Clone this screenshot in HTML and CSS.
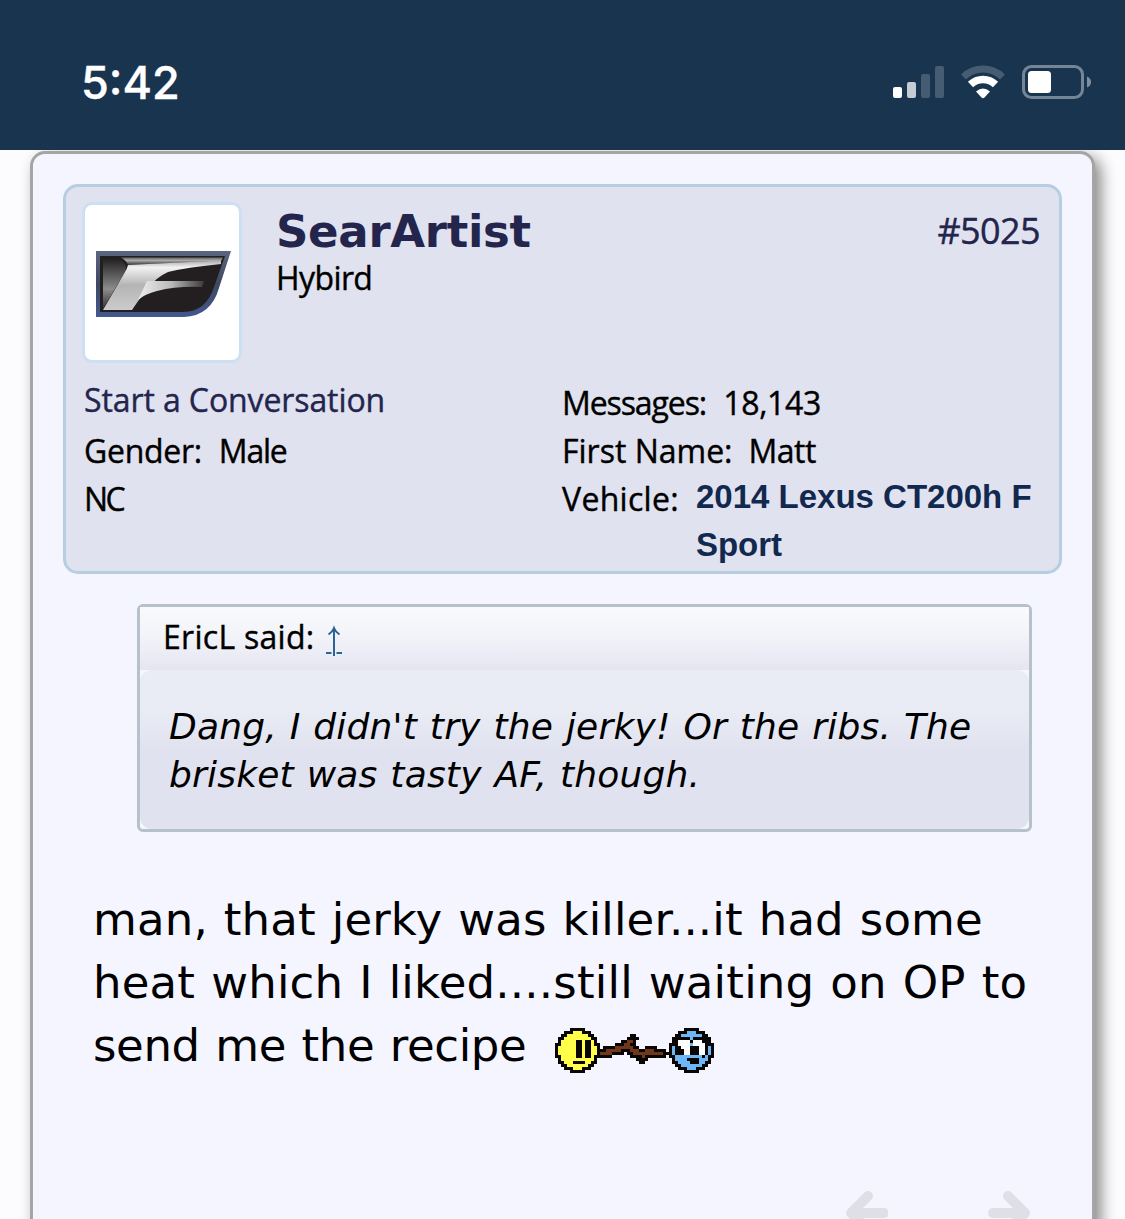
FILE: index.html
```html
<!DOCTYPE html>
<html lang="en">
<head>
<meta charset="utf-8">
<title>Forum thread</title>
<link rel="stylesheet" href="styles.css">
</head>
<body>
<header class="status">
  <span class="clock">5:42</span>
  <div class="status-icons">
    <svg class="signal" width="51" height="32" viewBox="0 0 51 32" fill="#fff">
      <rect x="0" y="21" width="9" height="11" rx="2"/>
      <rect x="14" y="16" width="9" height="16" rx="2" opacity=".75"/>
      <rect x="28" y="8" width="9" height="24" rx="2" opacity=".2"/>
      <rect x="42" y="0" width="9" height="32" rx="2" opacity=".2"/>
    </svg>
    <svg class="wifi" width="46" height="34" viewBox="0 0 46 34" fill="none">
      <path d="M3.500 12A28 28 0 0 1 42.500 12" stroke="#fff" stroke-opacity=".2" stroke-width="7"/>
      <path d="M10.500 19.500A18 18 0 0 1 35.500 19.500" stroke="#fff" stroke-width="7.500"/>
      <path d="M16 26.500Q23 20.500 30 26.500L24.500 32.500Q23 34 21.500 32.500Z" fill="#fff"/>
    </svg>
    <svg class="battery" width="70" height="34" viewBox="0 0 70 34">
      <rect x="1.500" y="1.500" width="59" height="31" rx="8" fill="none" stroke="#fff" stroke-opacity=".4" stroke-width="3"/>
      <rect x="6" y="6" width="23" height="22" rx="3.500" fill="#fff"/>
      <path d="M65 11.500Q69 13 69 17T65 22.500Z" fill="#fff" fill-opacity=".45"/>
    </svg>
  </div>
</header>
<main class="page">
  <article class="post">
    <section class="user">
      <div class="user-head">
        <div class="avatar">
          <svg width="154" height="155" viewBox="0 0 154 155">
            <defs>
              <linearGradient id="rim" x1="0" y1="0" x2="0" y2="1"><stop offset="0" stop-color="#5b6680"/><stop offset=".5" stop-color="#3f4862"/><stop offset="1" stop-color="#42588f"/></linearGradient>
              <linearGradient id="silver" x1="0" y1="0" x2="0" y2="1"><stop offset="0" stop-color="#aaa"/><stop offset=".14" stop-color="#f2f2f2"/><stop offset=".5" stop-color="#b4b4b4"/><stop offset="1" stop-color="#ccc"/></linearGradient>
              <linearGradient id="side" x1="0" y1="0" x2="0" y2="1"><stop offset="0" stop-color="#222"/><stop offset=".6" stop-color="#8c8c8c"/><stop offset="1" stop-color="#333"/></linearGradient>
              <linearGradient id="bar" x1="0" y1="0" x2="1" y2="0"><stop offset="0" stop-color="#eee"/><stop offset=".5" stop-color="#bbb"/><stop offset="1" stop-color="#3a3a3a"/></linearGradient>
              <linearGradient id="top" x1="0" y1="0" x2="0" y2="1"><stop offset="0" stop-color="#666"/><stop offset=".4" stop-color="#aaa"/><stop offset="1" stop-color="#333"/></linearGradient>
            </defs>
            <path d="M11 46H146L134 83Q126 111 99 112H11Z" fill="url(#rim)"/>
            <path d="M15 51H140L129 82Q121 107 98 107H15Z" fill="#231f20"/>
            <path d="M18 54H33Q41 56 41 65L18 104Z" fill="url(#side)"/>
            <path d="M36 52.500H138L136 56L43 60Q41 55 36 52.500Z" fill="url(#top)"/>
            <path d="M43 60L136 55.500V59Q104 62 83 67Q70 73 64 83Q59 87 47 105H18L40 67Q42 64 43 60Z" fill="url(#silver)"/>
            <path d="M62 76H119L117 82Q92 81 72 86Q60 89 53 95Z" fill="url(#bar)"/>
          </svg>
        </div>
        <div class="who">
          <h2>SearArtist</h2>
          <p>Hybird</p>
        </div>
        <a class="number">#5025</a>
      </div>
      <div class="facts">
        <div class="col">
          <a class="start">Start a Conversation</a>
          <div class="row"><span class="snug">Gender:</span><span class="male">Male</span></div>
          <div class="row"><span class="state">NC</span></div>
        </div>
        <div class="col">
          <div class="row"><span class="messages">Messages:</span><span class="snug">18,143</span></div>
          <div class="row"><span>First Name:</span><span class="first">Matt</span></div>
          <div class="row"><span class="vehicle">Vehicle:</span><strong>2014 Lexus CT200h F<br>Sport</strong></div>
        </div>
      </div>
    </section>
    <blockquote class="quote">
      <div class="quote-head"><span>EricL said:</span>
        <a class="up" aria-label="Up"><svg width="18" height="32" viewBox="0 0 18 32" fill="none" stroke="#2a6496" stroke-width="2"><path d="M9 31V4M3.500 9.500Q7.500 7 9 3Q10.500 7 14.500 9.500M1 28H6.500M11.500 28H17"/></svg></a>
      </div>
      <p class="quote-body">Dang, I didn't try the jerky! Or the ribs. The<br>brisket was tasty AF, though.</p>
    </blockquote>
    <p class="message">man, that jerky was killer...it had some<br><span class="second">heat which I liked....still waiting on OP to</span><br><span class="third">send me the recipe</span>
      <svg class="smilie" id="smilie" width="159" height="45" viewBox="0 0 53 15" shape-rendering="crispEdges"></svg></p>
    <nav class="pager">
      <svg width="42" height="44" viewBox="0 0 42 44"><path d="M22 5L5 22L22 39M5 22H38" fill="none" stroke="#dfdfe8" stroke-width="10" stroke-linecap="round" stroke-linejoin="round"/></svg>
      <svg width="42" height="44" viewBox="0 0 42 44"><path d="M20 5L37 22L20 39M37 22H5" fill="none" stroke="#dfdfe8" stroke-width="10" stroke-linecap="round" stroke-linejoin="round"/></svg>
    </nav>
  </article>
</main>
<script src="smilie.js"></script>
</body>
</html>
```
FILE: smilie.js
```js
// Pixel map of the smilie: yellow face, stick, blue face.
const palette = { K: "#0b0606", Y: "#ffff4a", S: "#70381a", B: "#6cb8f6", W: "#fff" };
const yellow = [
  ".....KKKKK.....",
  "...KKKYYYKKK...",
  "..KKYYYYYYYKK..",
  ".KKYYYYYYYYYKK.",
  ".KYYYYYKKYKKYK.",
  "KKYYYYYKKYKKYKK",
  "KYYYYYYKKYKKYYK",
  "KYYYYYYKKYKKYYK",
  "KYYYYYYKKYKKYYK",
  "KKYYYYYKKYKKYKK",
  ".KYYYYYYYYYYYK.",
  ".KKYYYKKKKYYKK.",
  "..KKYYYYYYYKK..",
  "...KKKYYYKKK...",
  ".....KKKKK....."
];
const stick = [
  ".......................",
  ".......................",
  "..........KK...........",
  ".........KKKK..........",
  ".......KKSSK...........",
  ".....KKKSSKK...........",
  ".KKKKSSSSSSKK..KKKK....",
  "KKSSSSSKKKSSSKKSSSKKKK.",
  "SSSSKKKK.KKSSSSSSSSSSKK",
  "KKKK......KKKKSKKKKKKK.",
  "............KKKK.......",
  ".............KK........",
  ".......................",
  ".......................",
  "......................."
];
const blue = [
  ".....KKKKK.....",
  "...KKKBBBKKK...",
  "..KKBBBBBBBKK..",
  ".KKKKKKBKKKKKK.",
  ".KKWWWWKWWWKKK.",
  "KKKWWWWBWWWWKKK",
  "KBKKWWWKKKWWKBK",
  "KBKKKWWKKKWWKBK",
  "KBKKKWWKKKWWKBK",
  "KKBBBBBBBBBKBKK",
  ".KBBBBKKKKBBBK.",
  ".KKBBBBKKKBBKK.",
  "..KKBBBBBBBKK..",
  "...KKKBBBKKK...",
  ".....KKKKK....."
];
const paths = {};
yellow.forEach((row, y) => {
  [...(row + stick[y].slice(0, 23).padEnd(23, ".") + blue[y])].forEach((c, x) => {
    if (c !== ".") paths[c] = (paths[c] || "") + `M${x} ${y}h1v1h-1z`;
  });
});
document.getElementById("smilie").innerHTML = Object.entries(paths)
  .map(([c, d]) => `<path fill="${palette[c]}" d="${d}"/>`)
  .join("");
```
FILE: styles.css
```css
* { box-sizing: border-box; }
body { margin: 0; height: 1219px; overflow: hidden; background: #fcfcfe; color: #000; font-family: "Open Sans", "Noto Sans", sans-serif; }
h2, p, blockquote { margin: 0; }
.status { height: 150px; background: #18344f; color: #fff; display: flex; justify-content: space-between; align-items: flex-start; padding: 65px 33px 0 81px; }
.clock { font: 500 45px/36px Inter, sans-serif; -webkit-text-stroke: .4px #fff; }
.status-icons { display: flex; }
.signal { margin: 1px 16px 0 0; }
.wifi { margin-right: 16px; }
.page { height: 1069px; padding: 1px 30px 0; overflow: hidden; }
.post { height: 1200px; border: 3px solid #a5a5a5; border-radius: 15px; background: #f5f5ff; padding: 30px; box-shadow: 6px 6px 15px #888; }
.user { height: 390px; border: 3px solid #b5cee2; border-radius: 15px; background: #e1e2ef; padding: 15px 19px 0 16px; }
.user-head { display: flex; height: 177px; }
.avatar { width: 160px; height: 161px; border: 3px solid #cce0f1; border-radius: 10px; background: #fff; overflow: hidden; }
.avatar svg { display: block; }
.who { flex: 1; padding: 3px 0 0 34px; }
.who h2 { font: bold 45px/54px "DejaVu Sans", sans-serif; letter-spacing: -.3px; color: #23254d; }
.who p { margin-top: -1px; font-size: 32px; line-height: 40px; letter-spacing: -.6px; -webkit-text-stroke: .4px; }
.number { font-size: 36px; line-height: 57px; letter-spacing: -.6px; color: #23254d; -webkit-text-stroke: .4px; }
.facts { display: flex; font-size: 32px; line-height: 48px; -webkit-text-stroke: .4px; }
.col { width: 478px; padding-left: 2px; }
.start { display: block; margin-top: -3px; padding-bottom: 3px; letter-spacing: -.1px; color: #23254d; }
.row { display: flex; gap: 17px; }
.snug { letter-spacing: -.3px; }
.male { letter-spacing: -1.2px; }
.state { letter-spacing: -2.500px; }
.messages { letter-spacing: -1.1px; }
.first { margin-left: -1px; letter-spacing: -.5px; }
.vehicle { letter-spacing: .3px; }
.row strong { margin-top: -2px; font: bold 33px/48px "Liberation Sans", sans-serif; color: #11284f; white-space: nowrap; -webkit-text-stroke: 0; }
.quote { margin: 30px 30px 0 74px; height: 228px; width: 895px; border: 3px solid #b7c1cb; border-radius: 6px; background: #f5f7fc; }
.quote-head { height: 63px; padding-left: 23px; background: linear-gradient(#f8fafd, #f3f4f9 45%, #e4e5f1); font-size: 32px; line-height: 60px; letter-spacing: .28px; -webkit-text-stroke: .4px; display: flex; gap: 11px; }
.up svg { display: block; margin-top: 18px; }
.quote-body { height: 159px; padding: 33px 0 0 29px; border-radius: 12px; background: linear-gradient(#e9ecf5, #e9ecf5 25%, #e1e2ef 50%); font: italic 36px/48px "DejaVu Sans", sans-serif; letter-spacing: .19px; word-spacing: 1.2px; white-space: nowrap; }
.message { margin: 56px 0 0 30px; font: 45px/63px "DejaVu Sans", sans-serif; letter-spacing: .15px; word-spacing: 1.500px; white-space: nowrap; }
.second { letter-spacing: .19px; }
.third { letter-spacing: -.35px; }
.smilie { margin-left: 13px; vertical-align: -12px; }
.pager { display: flex; gap: 100px; justify-content: flex-end; margin-top: 114px; padding-right: 32px; }
```
